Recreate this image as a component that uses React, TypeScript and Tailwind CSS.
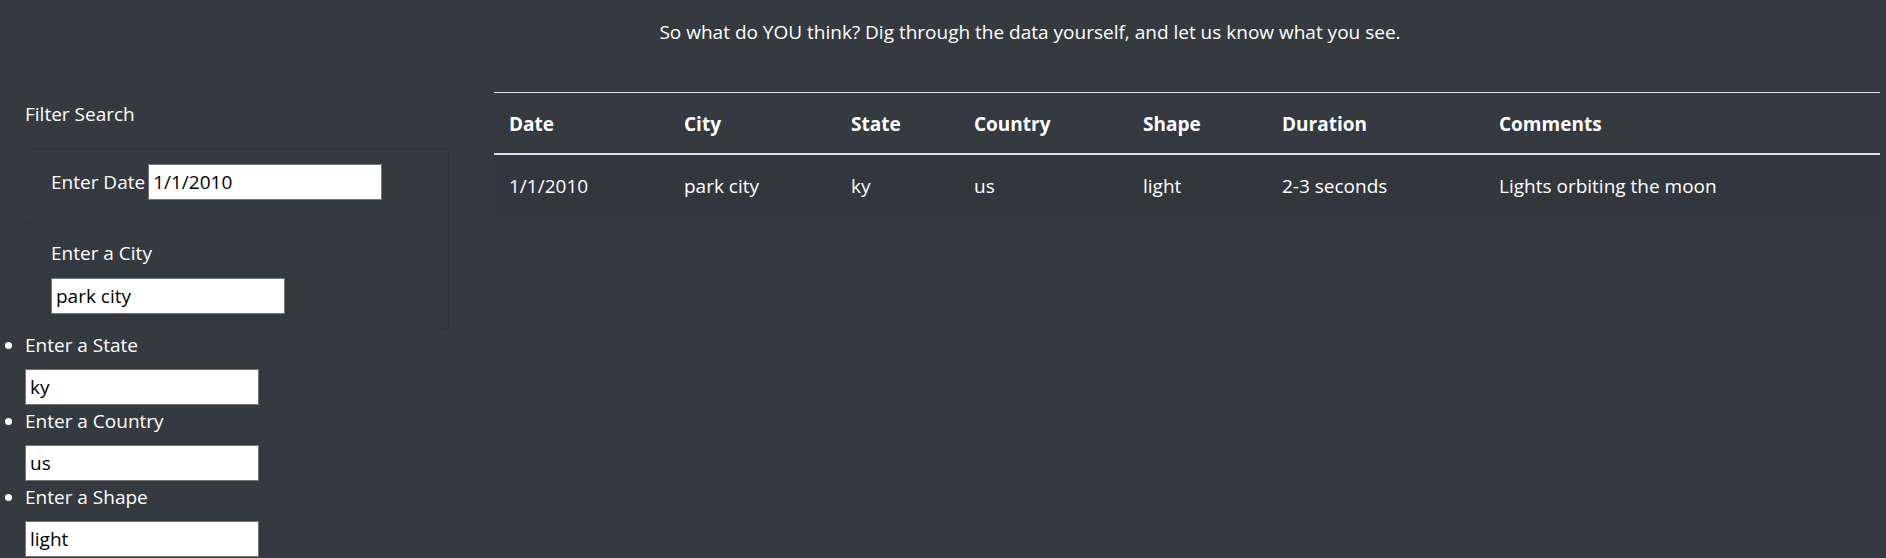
import React from 'react';

const rows = [
  {
    date: '1/1/2010',
    city: 'park city',
    state: 'ky',
    country: 'us',
    shape: 'light',
    duration: '2-3 seconds',
    comments: 'Lights orbiting the moon',
  },
];

const cols = [
  { label: 'Date', w: 'w-[175px]' },
  { label: 'City', w: 'w-[167px]' },
  { label: 'State', w: 'w-[123px]' },
  { label: 'Country', w: 'w-[169px]' },
  { label: 'Shape', w: 'w-[139px]' },
  { label: 'Duration', w: 'w-[217px]' },
  { label: 'Comments', w: 'w-[396px]' },
];

const inputCls =
  'block w-[234px] h-[36px] bg-white text-black border border-[#767676] px-[4px] text-[19px] outline-none';

const cellCls = 'px-[15px] pt-[16px] pb-[14px]';

const BulletField: React.FC<{ label: string; value: string }> = ({ label, value }) => (
  <li className="pb-[1px]">
    <label className="block leading-[30px] mb-[9px]">{label}</label>
    <input type="text" defaultValue={value} className={inputCls} />
  </li>
);

export default function App() {
  return (
    <div
      className="min-h-screen bg-[#343a40] text-white text-[19px] leading-[30px]"
      style={{ fontFamily: '"Open Sans", "Noto Sans", sans-serif' }}
    >
      <div className="pt-[17px] pl-[174px] text-center h-[92px]">
        So what do YOU think? Dig through the data yourself, and let us know what you see.
      </div>

      <div className="flex">
        {/* filters */}
        <div className="ml-[25px] w-[424px] pt-[7px]">
          <div className="leading-[30px] mb-[19px]">Filter Search</div>
          <ul className="list-disc">
            <li className="list-none border border-[#2e3338] rounded-t-[4px] px-[25px] py-[15px]">
              <div className="flex items-center h-[36px] mb-[7px]">
                <label className="mr-[3px]">Enter Date</label>
                <input type="text" defaultValue="1/1/2010" className={inputCls} />
              </div>
            </li>
            <li className="list-none border border-t-0 border-[#2e3338] rounded-b-[4px] px-[25px] py-[15px]">
              <label className="block leading-[30px] mb-[10px]">Enter a City</label>
              <input type="text" defaultValue="park city" className={inputCls} />
            </li>
            <BulletField label="Enter a State" value="ky" />
            <BulletField label="Enter a Country" value="us" />
            <BulletField label="Enter a Shape" value="light" />
          </ul>
        </div>

        {/* results */}
        <div className="ml-[45px] w-[1386px]">
          <table className="w-full table-fixed border-collapse">
            <thead>
              <tr className="border-t border-[#dee2e6]">
                {cols.map((c) => (
                  <th
                    key={c.label}
                    className={`${c.w} ${cellCls} text-left font-bold border-b-2 border-[#dee2e6]`}
                  >
                    {c.label}
                  </th>
                ))}
              </tr>
            </thead>
            <tbody>
              {rows.map((r, i) => (
                <tr key={i} className="bg-[#31373d]">
                  <td className={cellCls}>{r.date}</td>
                  <td className={cellCls}>{r.city}</td>
                  <td className={cellCls}>{r.state}</td>
                  <td className={cellCls}>{r.country}</td>
                  <td className={cellCls}>{r.shape}</td>
                  <td className={cellCls}>{r.duration}</td>
                  <td className={cellCls}>{r.comments}</td>
                </tr>
              ))}
            </tbody>
          </table>
        </div>
      </div>
    </div>
  );
}
